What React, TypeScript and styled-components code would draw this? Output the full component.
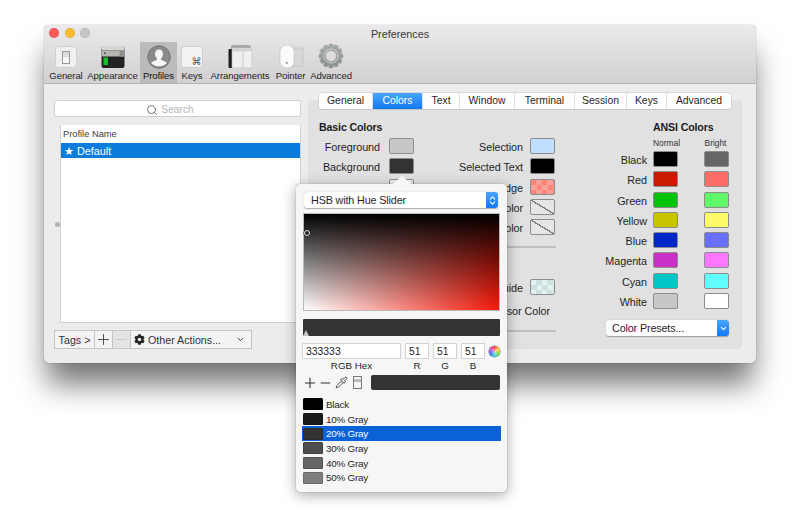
import React from "react";
import styled, { createGlobalStyle, css } from "styled-components";
import { Search, Plus, Minus, ChevronDown, ChevronsUpDown, Pipette } from "lucide-react";
import { FaCog } from "react-icons/fa";

const Global = createGlobalStyle`
  html, body { margin: 0; background: #fff; }
  body { font-family: "Liberation Sans", Arial, sans-serif; color: #1a1a1a; -webkit-font-smoothing: antialiased; }
  * { box-sizing: border-box; }
`;

const Page = styled.div`
  width: 800px;
  height: 518px;
  padding: 25px 44px 0;
  overflow: hidden;
`;

const Win = styled.div`
  position: relative;
  width: 712px;
  height: 338px;
  border-radius: 5px;
  background: #ececec;
  box-shadow: 0 0 1px rgba(0, 0, 0, 0.6), 0 24px 30px -3px rgba(0, 0, 0, 0.55);
  display: flex;
  flex-direction: column;
`;

const Header = styled.header`
  height: 59px;
  flex: none;
  border-radius: 5px 5px 0 0;
  background: linear-gradient(#ebe9eb, #d2d0d2);
  border-bottom: 1px solid #b4b4b4;
`;

const TitleRow = styled.div`
  position: relative;
  height: 17px;
  display: flex;
  align-items: center;
  justify-content: center;
  font-size: 10.8px;
  color: #3a3a3a;
  padding-top: 1px;
`;

const Lights = styled.div`
  position: absolute;
  left: 5px;
  top: 3px;
  display: flex;
  gap: 5.5px;
`;

const Light = styled.span<{ $c: string }>`
  width: 10px;
  height: 10px;
  border-radius: 50%;
  background: ${(p) => p.$c};
  box-shadow: inset 0 0 0 0.5px rgba(0, 0, 0, 0.12);
`;

const Toolbar = styled.nav`
  display: flex;
  padding-left: 3px;
  height: 41px;
`;

const ToolItem = styled.div<{ $w: number; $on?: boolean }>`
  width: ${(p) => p.$w}px;
  display: flex;
  flex-direction: column;
  align-items: center;
  padding-top: 1px;
  font-size: 9.6px;
  letter-spacing: -0.12px;
  line-height: 12px;
  color: #262626;
  white-space: nowrap;
  ${(p) =>
    p.$on &&
    css`
      background: #bcbbbc;
      color: #141414;
    `}
  svg { display: block; flex: none; margin-bottom: 1px; }
`;

const Body = styled.main`
  flex: 1;
  display: flex;
  padding: 16px 0 0 10px;
  gap: 7px;
`;

const LeftCol = styled.section`
  width: 247px;
  display: flex;
  flex-direction: column;
  gap: 8px;
`;

const SearchBox = styled.div`
  height: 17px;
  background: #fff;
  border: 1px solid #d0d0d0;
  border-radius: 3px;
  display: flex;
  align-items: center;
  justify-content: center;
  gap: 3px;
  padding: 2px 15px 0 0;
  font-size: 10.2px;
  color: #b5b5b5;
  svg { color: #555; }
`;

const ListRow = styled.div`
  display: flex;
  align-items: center;
  height: 198px;
`;

const Handle = styled.span`
  width: 6px;
  flex: none;
  &::before {
    content: "";
    display: block;
    width: 5px;
    height: 5px;
    margin-left: 1px;
    border-radius: 50%;
    background: #b3b3b3;
  }
`;

const Table = styled.div`
  flex: 1;
  height: 100%;
  background: #fff;
  border: 1px solid #d0d0d0;
  border-top: 0;
`;

const TableHead = styled.div`
  height: 18px;
  padding: 0 2px 1px;
  display: flex;
  align-items: center;
  font-size: 9.3px;
  color: #3c3c3c;
`;

const TableRow = styled.div`
  height: 15px;
  background: #0b7bdc;
  color: #fff;
  font-size: 10.8px;
  line-height: 16px;
  padding-left: 3px;
  white-space: pre;
`;

const BottomBar = styled.div`
  width: 198px;
  height: 19px;
  margin-top: -1px;
  display: flex;
  border: 1px solid #c4c4c4;
  background: #f3f3f3;
  font-size: 10.7px;
`;

const BarBtn = styled.div<{ $w?: number; $off?: boolean }>`
  ${(p) => (p.$w ? `width: ${p.$w}px; flex: none;` : "flex: 1;")}
  display: flex;
  align-items: center;
  justify-content: center;
  border-right: 1px solid #c4c4c4;
  color: #333;
  ${(p) => p.$off && "background: #e4e4e4; color: #c2c2c2;"}
  &:last-child { border-right: 0; justify-content: flex-start; padding: 0 6px 0 3px; gap: 3px; }
`;

const Spacer = styled.span`
  flex: 1;
`;

const RightCol = styled.section`
  position: relative;
  width: 434px;
`;

const Tabs = styled.div`
  position: absolute;
  left: 11px;
  top: -7px;
  height: 15.5px;
  display: flex;
  background: #fff;
  border-radius: 3px;
  box-shadow: 0 0 0 0.5px #c6c6c6, 0 1px 0 #c6c6c6;
  font-size: 10.4px;
  z-index: 1;
`;

const Tab = styled.div<{ $w: number; $on?: boolean }>`
  width: ${(p) => p.$w}px;
  display: flex;
  align-items: center;
  justify-content: center;
  color: #1f1f1f;
  border-right: 1px solid #dedede;
  &:last-child { border-right: 0; }
  ${(p) =>
    p.$on &&
    css`
      background: linear-gradient(#4aa6fb, #1277f3);
      color: #fff;
    `}
`;

const Panel = styled.div`
  height: 249px;
  background: #e1e1e1;
  border-radius: 4px;
  padding: 20px 0 0 11px;
  display: flex;
`;

const BasicBlock = styled.div`
  width: 237px;
  flex: none;
`;

const Heading = styled.h3`
  margin: 0;
  font-size: 10.6px;
  letter-spacing: -0.12px;
  line-height: 14px;
  font-weight: 700;
  color: #1c1c1c;
`;

const BasicColumns = styled.div`
  display: flex;
  margin-top: 4px;
`;

const SwatchColumn = styled.div<{ $w: number; $gap: number }>`
  width: ${(p) => p.$w}px;
  display: flex;
  flex-direction: column;
  gap: 4.3px;
  & > div { gap: ${(p) => p.$gap}px; }
`;

const Row = styled.div`
  height: 16px;
  display: flex;
  align-items: flex-start;
  justify-content: flex-end;
  gap: 7px;
  font-size: 10.8px;
  letter-spacing: -0.05px;
  line-height: 18px;
  color: #1f1f1f;
  white-space: nowrap;
`;

const RowPlain = styled(Row)<{ $w: number }>`
  width: ${(p) => p.$w}px;
  margin-top: 7px;
`;

const Swatch = styled.span<{ $bg: string; $kind?: "check" | "slash"; $c2?: string }>`
  width: 25px;
  height: 16px;
  flex: none;
  border-radius: 2px;
  border: 1px solid #8c8c8c;
  background-color: ${(p) => p.$bg};
  ${(p) =>
    p.$kind === "check" &&
    css`
      background-image: conic-gradient(
        ${p.$c2} 25%,
        transparent 0 50%,
        ${p.$c2} 0 75%,
        transparent 0
      );
      background-size: 11px 10px;
    `}
  ${(p) =>
    p.$kind === "slash" &&
    css`
      background-image: linear-gradient(
        to top right,
        transparent calc(50% - 0.7px),
        #808080 calc(50% - 0.7px),
        #808080 calc(50% + 0.7px),
        transparent calc(50% + 0.7px)
      );
    `}
`;

const Rule = styled.div<{ $top: number; $bottom?: number }>`
  height: 2px;
  width: 237px;
  background: #bfbfbf;
  margin: ${(p) => p.$top}px 0 ${(p) => p.$bottom ?? 0}px;
`;

const AnsiBlock = styled.div`
  width: 129px;
  margin-left: 44px;
  flex: none;
`;

const AnsiHeading = styled(Heading)`
  padding-left: 53px;
`;

const AnsiHead = styled.div`
  display: grid;
  grid-template-columns: 53px 25px 26px 25px;
  margin-top: 4px;
  height: 10px;
  margin-bottom: 3px;
  font-size: 8.4px;
  line-height: 10px;
  color: #333;
  text-align: center;
  white-space: nowrap;
`;

const AnsiCell = styled.span<{ $col: number; $shift: number }>`
  grid-column: ${(p) => p.$col};
  justify-self: center;
  transform: translateX(${(p) => p.$shift}px);
`;

const AnsiRows = styled.div`
  display: flex;
  flex-direction: column;
  gap: 4.3px;
`;

const AnsiRow = styled.div`
  display: grid;
  grid-template-columns: 47px 25px 26px 25px;
  height: 16px;
  align-items: center;
  font-size: 10.8px;
  letter-spacing: -0.05px;
  color: #1f1f1f;
  & > span:first-child {
    text-align: right;
    white-space: nowrap;
    padding-top: 2px;
    line-height: 14px;
  }
  & > span:nth-child(2) { margin-left: 6px; }
  & > span:nth-child(3) { margin-left: 32px; }
`;

const Presets = styled.div`
  margin: 11px 0 0 6px;
  width: 123px;
  height: 16px;
  background: #fff;
  border-radius: 3px;
  box-shadow: 0 0.5px 1px rgba(0, 0, 0, 0.3);
  display: flex;
  align-items: center;
  justify-content: space-between;
  padding-left: 6px;
  font-size: 10.8px;
  letter-spacing: -0.15px;
  color: #1f1f1f;
`;

const BlueEnd = styled.span`
  width: 12px;
  height: 16px;
  border-radius: 0 3px 3px 0;
  background: linear-gradient(#4aa6fb, #1277f3);
  color: #fff;
  display: flex;
  align-items: center;
  justify-content: center;
`;

const Popover = styled.div`
  position: absolute;
  left: 252px;
  top: 159px;
  width: 211px;
  height: 308px;
  z-index: 5;
  padding: 8px 6px 0 6px;
  background: #f6f6f6;
  border-radius: 4px;
  box-shadow: 0 0 1px rgba(0, 0, 0, 0.5), 0 3px 14px rgba(0, 0, 0, 0.35);
  &::before {
    content: "";
    position: absolute;
    left: 97px;
    top: -8px;
    width: 0;
    height: 0;
    border-left: 9px solid transparent;
    border-right: 9px solid transparent;
    border-bottom: 8px solid #f6f6f6;
  }
`;

const Select = styled.div`
  margin-left: 2px;
  width: 194px;
  height: 16px;
  background: #fff;
  border-radius: 3px;
  box-shadow: 0 0.5px 1px rgba(0, 0, 0, 0.3);
  display: flex;
  align-items: center;
  justify-content: space-between;
  padding-left: 7px;
  font-size: 10.8px;
  letter-spacing: -0.15px;
  color: #1f1f1f;
`;

const Field = styled.div`
  position: relative;
  margin: 5px 0 0 1px;
  width: 197px;
  height: 98px;
  border: 1px solid #b8b8b8;
  background: linear-gradient(#000, rgba(0, 0, 0, 0)), linear-gradient(to right, #fff, #f51a0a);
`;

const FieldDot = styled.span`
  position: absolute;
  left: 0;
  top: 16px;
  width: 6px;
  height: 6px;
  border-radius: 50%;
  border: 1.5px solid #e8e8e8;
  background: #222;
  box-shadow: 0 0 0 0.5px #222;
`;

const HueBar = styled.div`
  position: relative;
  margin: 8px 0 0 1px;
  width: 197px;
  height: 17px;
  background: #333;
  border-radius: 1px;
  &::after {
    content: "";
    position: absolute;
    left: 0;
    bottom: 0;
    border-left: 3.5px solid transparent;
    border-right: 3.5px solid transparent;
    border-bottom: 6px solid #c8c8c8;
  }
`;

const InputRow = styled.div`
  display: flex;
  align-items: center;
  gap: 4px;
  margin-top: 7px;
`;

const Input = styled.div<{ $w: number }>`
  width: ${(p) => p.$w}px;
  height: 16px;
  background: #fff;
  border: 1px solid #d4d4d4;
  font-size: 10.4px;
  line-height: 15px;
  padding-left: 3px;
  color: #1f1f1f;
`;

const Wheel = styled.span`
  width: 11px;
  height: 11px;
  border-radius: 50%;
  background: radial-gradient(circle, rgba(255, 255, 255, 0.55), rgba(255, 255, 255, 0) 70%),
    conic-gradient(#f33, #fc3, #6d3, #3cd, #36e, #c4d, #f33);
  box-shadow: 0 0 0 0.5px #777;
`;

const InputLabels = styled.div`
  display: flex;
  gap: 4px;
  height: 12px;
  margin-top: 1px;
  font-size: 9.8px;
  line-height: 12px;
  text-align: center;
  color: #1f1f1f;
`;

const InputLabel = styled.span<{ $w: number }>`
  width: ${(p) => p.$w}px;
`;

const ToolRow = styled.div`
  display: flex;
  align-items: center;
  margin-top: 3px;
  height: 15px;
  color: #333;
`;

const ToolSlot = styled.span<{ $w: number }>`
  width: ${(p) => p.$w}px;
  flex: none;
  display: flex;
  justify-content: center;
`;

const DocIcon = styled.span`
  width: 9px;
  height: 13px;
  border: 1px solid #777;
  background: linear-gradient(#f6f6f6 0 2px, #bbb 2px 5px, #f6f6f6 5px);
`;

const Preview = styled.div`
  margin-left: 6px;
  width: 129px;
  height: 15px;
  background: #333;
  border-radius: 2px;
`;

const ColorList = styled.div`
  margin-top: 7px;
  display: flex;
  flex-direction: column;
`;

const ColorRow = styled.div<{ $on?: boolean }>`
  height: 14.7px;
  width: 199px;
  display: flex;
  align-items: center;
  gap: 3px;
  padding-left: 1px;
  font-size: 9.9px;
  letter-spacing: -0.25px;
  color: ${(p) => (p.$on ? "#fff" : "#1f1f1f")};
  ${(p) => p.$on && "background: #0a62d6;"}
`;

const ColorChip = styled.span<{ $c: string }>`
  width: 20px;
  height: 12px;
  border-radius: 1.5px;
  background: ${(p) => p.$c};
  box-shadow: inset 0 0 0 0.5px rgba(0, 0, 0, 0.35);
`;

const gearPath = (() => {
  const cx = 13, cy = 13, teeth = 12, ro = 12, ri = 9.6;
  const step = (Math.PI * 2) / teeth;
  const pts: string[] = [];
  for (let i = 0; i < teeth; i++) {
    const a = i * step - Math.PI / 2;
    [[ri, -0.5], [ro, -0.27], [ro, 0.27], [ri, 0.5]].forEach(([r, o]) => {
      const t = a + o * step;
      pts.push(`${(cx + r * Math.cos(t)).toFixed(2)} ${(cy + r * Math.sin(t)).toFixed(2)}`);
    });
  }
  return `M${pts.join("L")}Z M${cx - 5.5} ${cy}a5.5 5.5 0 1 0 11 0a5.5 5.5 0 1 0 -11 0Z`;
})();

const GeneralIcon = () => (
  <svg width="26" height="26" viewBox="0 0 26 26">
    <rect x="2.5" y="3.5" width="21" height="21" rx="3" fill="#f1f0f1" stroke="#cfcfcf" />
    <rect x="9.5" y="8.5" width="7" height="12" fill="#f7f7f7" stroke="#9a9a9a" />
    <rect x="10" y="9" width="6" height="5" fill="#dcdcdc" />
  </svg>
);

const AppearanceIcon = () => (
  <svg width="26" height="26" viewBox="0 0 26 26">
    <rect x="1.5" y="3" width="23" height="22" rx="2" fill="#222" />
    <rect x="1.5" y="3" width="23" height="4.5" rx="1.5" fill="#d6d6d6" />
    <rect x="1.5" y="7.5" width="23" height="6" fill="#b4b6b0" />
    <rect x="19.5" y="7.5" width="5" height="6" fill="#8f928a" />
    <rect x="4" y="9.5" width="1.5" height="1.5" fill="#444" />
    <rect x="3.5" y="14.5" width="4.5" height="7.5" fill="#16c02f" />
  </svg>
);

const ProfilesIcon = () => (
  <svg width="26" height="26" viewBox="0 0 26 26">
    <circle cx="13" cy="14" r="11.5" fill="#8b8a8b" />
    <circle cx="13" cy="14" r="11.2" fill="none" stroke="#727172" strokeWidth="0.8" />
    <path
      d="M13 6.5c-2.6 0-4 2-4 4.6 0 1.9.8 3.5 1.9 4.4v1.3c-2.1.9-4.8 1.8-5.8 3.2a11 11 0 0 0 15.8 0c-1-1.4-3.7-2.3-5.8-3.2v-1.3c1.1-.9 1.9-2.5 1.9-4.4 0-2.6-1.4-4.6-4-4.6Z"
      fill="#f5f5f5"
    />
  </svg>
);

const KeysIcon = () => (
  <svg width="26" height="26" viewBox="0 0 26 26">
    <rect x="2.5" y="3.5" width="21" height="21" rx="3" fill="#f4f3f4" stroke="#cfcfcf" />
    <text x="12.5" y="21.5" fontSize="10" fill="#555" fontFamily="DejaVu Sans, sans-serif">⌘</text>
  </svg>
);

const ArrangeIcon = () => (
  <svg width="26" height="26" viewBox="0 0 26 26">
    <rect x="4" y="2" width="20" height="20" rx="2" fill="#a8a8a8" />
    <rect x="1.5" y="6" width="22" height="19" rx="1" fill="#1e1e1e" />
    <rect x="5" y="5" width="20" height="20" rx="1" fill="#efefef" stroke="#bdbdbd" strokeWidth="0.6" />
    <rect x="5.3" y="5.3" width="19.4" height="3" fill="#d2d2d2" />
    <path d="M16 8v17" stroke="#bdbdbd" strokeWidth="0.7" />
  </svg>
);

const PointerIcon = () => (
  <svg width="26" height="26" viewBox="0 0 26 26">
    <rect x="13" y="5" width="12" height="18" rx="1.5" fill="#d7d7d7" stroke="#bbb" strokeWidth="0.6" />
    <rect x="2" y="2" width="14" height="23" rx="6.5" fill="#fbfbfb" stroke="#c4c4c4" strokeWidth="0.7" />
    <rect x="8" y="19" width="1.6" height="1.6" fill="#777" />
  </svg>
);

const GearIcon = () => (
  <svg width="26" height="26" viewBox="0 0 26 26">
    <defs>
      <linearGradient id="gg" x1="0" y1="0" x2="0" y2="1">
        <stop offset="0" stopColor="#a9acac" />
        <stop offset="1" stopColor="#8b9090" />
      </linearGradient>
    </defs>
    <path d={gearPath} fill="url(#gg)" fillRule="evenodd" stroke="#85898a" strokeWidth="0.4" />
    <circle cx="13" cy="13" r="7" fill="none" stroke="#cfd1d1" strokeWidth="1" />
  </svg>
);

const tools: { label: string; w: number; icon: React.ReactNode; on?: boolean }[] = [
  { label: "General", w: 38, icon: <GeneralIcon /> },
  { label: "Appearance", w: 55, icon: <AppearanceIcon /> },
  { label: "Profiles", w: 37, icon: <ProfilesIcon />, on: true },
  { label: "Keys", w: 30, icon: <KeysIcon /> },
  { label: "Arrangements", w: 66, icon: <ArrangeIcon /> },
  { label: "Pointer", w: 35, icon: <PointerIcon /> },
  { label: "Advanced", w: 46, icon: <GearIcon /> },
];

const tabs = [
  ["General", 54],
  ["Colors", 50],
  ["Text", 37],
  ["Window", 55],
  ["Terminal", 60],
  ["Session", 52],
  ["Keys", 40],
  ["Advanced", 64],
] as const;

const ansi = [
  ["Black", "#000000", "#666666"],
  ["Red", "#c91b00", "#ff6d67"],
  ["Green", "#00c200", "#5ff967"],
  ["Yellow", "#c7c400", "#fefb67"],
  ["Blue", "#0225c7", "#6871ff"],
  ["Magenta", "#c930c7", "#ff76ff"],
  ["Cyan", "#00c5c7", "#5ffdff"],
  ["White", "#c7c7c7", "#ffffff"],
];

const grays = [
  ["Black", "#000"],
  ["10% Gray", "#1a1a1a"],
  ["20% Gray", "#333"],
  ["30% Gray", "#4d4d4d"],
  ["40% Gray", "#666"],
  ["50% Gray", "#7f7f7f"],
];

export default function App() {
  return (
    <Page>
      <Global />
      <Win>
        <Header>
          <TitleRow>
            <Lights>
              <Light $c="#fc5b57" />
              <Light $c="#fdbb2e" />
              <Light $c="#c6c6c6" />
            </Lights>
            Preferences
          </TitleRow>
          <Toolbar>
            {tools.map((t) => (
              <ToolItem key={t.label} $w={t.w} $on={t.on}>
                {t.icon}
                {t.label}
              </ToolItem>
            ))}
          </Toolbar>
        </Header>
        <Body>
          <LeftCol>
            <SearchBox>
              <Search size={12} strokeWidth={1.6} />
              Search
            </SearchBox>
            <ListRow>
              <Handle />
              <Table>
                <TableHead>Profile Name</TableHead>
                <TableRow>★ Default</TableRow>
              </Table>
            </ListRow>
            <BottomBar>
              <BarBtn $w={40}>Tags &gt;</BarBtn>
              <BarBtn $w={18}>
                <Plus size={17} strokeWidth={1.2} />
              </BarBtn>
              <BarBtn $w={18} $off>
                <Minus size={17} strokeWidth={1.2} />
              </BarBtn>
              <BarBtn>
                <FaCog size={11} color="#222" />
                Other Actions...
                <Spacer />
                <ChevronDown size={9} strokeWidth={2.5} />
              </BarBtn>
            </BottomBar>
          </LeftCol>
          <RightCol>
            <Tabs>
              {tabs.map(([t, w]) => (
                <Tab key={t} $w={w} $on={t === "Colors"}>
                  {t}
                </Tab>
              ))}
            </Tabs>
            <Panel>
              <BasicBlock>
                <Heading>Basic Colors</Heading>
                <BasicColumns>
                  <SwatchColumn $w={95} $gap={9}>
                    <Row>Foreground<Swatch $bg="#c7c7c7" /></Row>
                    <Row>Background<Swatch $bg="#333333" /></Row>
                    <Row>Bold<Swatch $bg="#f2f2f2" /></Row>
                  </SwatchColumn>
                  <SwatchColumn $w={141} $gap={7}>
                    <Row>Selection<Swatch $bg="#c1deff" /></Row>
                    <Row>Selected Text<Swatch $bg="#000000" /></Row>
                    <Row>Badge<Swatch $bg="#ff8377" $kind="check" $c2="#f4a197" /></Row>
                    <Row>Tab Color<Swatch $bg="#e6e6e6" $kind="slash" /></Row>
                    <Row>Underline Color<Swatch $bg="#e6e6e6" $kind="slash" /></Row>
                  </SwatchColumn>
                </BasicColumns>
                <Rule $top={11} $bottom={31} />
                <RowPlain $w={236}>Cursor Guide<Swatch $bg="#e2f3f3" $kind="check" $c2="#cfe0e0" /></RowPlain>
                <RowPlain $w={231}>Smart Box Cursor Color</RowPlain>
                <Rule $top={12} />
              </BasicBlock>
              <AnsiBlock>
                <AnsiHeading>ANSI Colors</AnsiHeading>
                <AnsiHead>
                  <AnsiCell $col={2} $shift={1}>Normal</AnsiCell>
                  <AnsiCell $col={4} $shift={-1}>Bright</AnsiCell>
                </AnsiHead>
                <AnsiRows>
                  {ansi.map(([n, a, b]) => (
                    <AnsiRow key={n}>
                      <span>{n}</span>
                      <Swatch $bg={a} />
                      <Swatch $bg={b} />
                    </AnsiRow>
                  ))}
                </AnsiRows>
                <Presets>
                  Color Presets...
                  <BlueEnd>
                    <ChevronDown size={9} strokeWidth={3} />
                  </BlueEnd>
                </Presets>
              </AnsiBlock>
            </Panel>
          </RightCol>
        </Body>
        <Popover>
          <Select>
            HSB with Hue Slider
            <BlueEnd>
              <ChevronsUpDown size={11} strokeWidth={2.2} />
            </BlueEnd>
          </Select>
          <Field>
            <FieldDot />
          </Field>
          <HueBar />
          <InputRow>
            <Input $w={99}>333333</Input>
            <Input $w={24}>51</Input>
            <Input $w={24}>51</Input>
            <Input $w={24}>51</Input>
            <Wheel />
          </InputRow>
          <InputLabels>
            <InputLabel $w={99}>RGB Hex</InputLabel>
            <InputLabel $w={24}>R</InputLabel>
            <InputLabel $w={24}>G</InputLabel>
            <InputLabel $w={24}>B</InputLabel>
          </InputLabels>
          <ToolRow>
            <ToolSlot $w={16}><Plus size={20} strokeWidth={1.6} /></ToolSlot>
            <ToolSlot $w={15}><Minus size={20} strokeWidth={1.6} /></ToolSlot>
            <ToolSlot $w={16}><Pipette size={13} strokeWidth={1.5} /></ToolSlot>
            <ToolSlot $w={16}><DocIcon /></ToolSlot>
            <Preview />
          </ToolRow>
          <ColorList>
            {grays.map(([n, c]) => (
              <ColorRow key={n} $on={n === "20% Gray"}>
                <ColorChip $c={c} />
                {n}
              </ColorRow>
            ))}
          </ColorList>
        </Popover>
      </Win>
    </Page>
  );
}
